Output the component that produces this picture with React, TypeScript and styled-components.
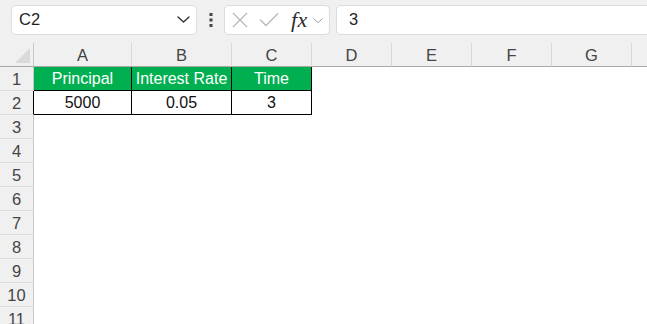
import React from 'react';
import styled, { createGlobalStyle } from 'styled-components';

const GlobalStyle = createGlobalStyle`
  html, body {
    margin: 0;
    padding: 0;
    background: #ffffff;
    overflow: hidden;
  }
  body {
    font-family: "Liberation Sans", Arial, sans-serif;
  }
`;

const Page = styled.div`
  width: 647px;
  height: 324px;
  overflow: hidden;
  background: #ffffff;
`;

const TopBar = styled.div`
  display: flex;
  align-items: center;
  height: 43px;
  padding: 0 0 4px 11px;
  box-sizing: border-box;
  background: #f0f0f0;
`;

const NameBox = styled.div`
  display: flex;
  align-items: center;
  justify-content: space-between;
  width: 186px;
  height: 30px;
  box-sizing: border-box;
  padding: 0 6px 0 7px;
  background: #ffffff;
  border: 1px solid #dcdcdc;
  border-radius: 5px;
  font-size: 16.5px;
  color: #1f1f1f;
`;

const Dots = styled.div`
  display: flex;
  justify-content: center;
  width: 27px;
`;

const FxBox = styled.div`
  display: flex;
  align-items: center;
  width: 106px;
  height: 30px;
  box-sizing: border-box;
  padding-left: 7px;
  background: #ffffff;
  border: 1px solid #dcdcdc;
  border-radius: 5px;
`;

const Fx = styled.span`
  font-family: "Liberation Serif", "Times New Roman", serif;
  font-style: italic;
  font-size: 22px;
  color: #2b2b2b;
  margin-left: 12px;
  letter-spacing: 0.5px;
  line-height: 22px;
`;

const FxMenu = styled.span`
  display: flex;
  margin-left: 5px;
  padding-top: 2px;
`;

const FormulaInput = styled.div`
  display: flex;
  align-items: center;
  flex: 1;
  height: 30px;
  margin-left: 6px;
  margin-right: -20px;
  box-sizing: border-box;
  padding-left: 12px;
  background: #ffffff;
  border: 1px solid #dcdcdc;
  border-radius: 5px;
  font-size: 16.5px;
  color: #1f1f1f;
`;

const Sheet = styled.div`
  display: grid;
  grid-template-columns: 34px 98px 100px 80px 80px 80px 80px 80px 80px;
  grid-template-rows: 24px;
  grid-auto-rows: 24px;
  font-size: 16.5px;
`;

const Corner = styled.div`
  position: relative;
  background: #f0f0f0;
  border-right: 1px solid #c9c9c9;
  border-bottom: 1px solid #a6a6a6;

  &::after {
    content: '';
    position: absolute;
    right: 3px;
    bottom: 3px;
    width: 0;
    height: 0;
    border-left: 15px solid transparent;
    border-bottom: 15px solid #dadada;
  }
`;

const ColHeader = styled.div`
  display: flex;
  align-items: flex-end;
  justify-content: center;
  padding-bottom: 2px;
  background: #f0f0f0;
  color: #444;
  border-right: 1px solid #d8d8d8;
  border-bottom: 1px solid #a6a6a6;
  line-height: 18px;
`;

const RowHeader = styled.div<{ $edge?: string }>`
  display: flex;
  align-items: flex-end;
  justify-content: center;
  padding-bottom: 2px;
  background: #f0f0f0;
  color: #444;
  border-right: 1px solid ${p => p.$edge || '#c9c9c9'};
  border-bottom: 1px solid #dcdcdc;
  line-height: 18px;
`;

const Cell = styled.div<{ $head?: boolean; $boxed?: boolean }>`
  display: flex;
  align-items: flex-end;
  justify-content: center;
  padding-bottom: 2px;
  line-height: 18px;
  font-size: 16px;
  white-space: nowrap;
  overflow: hidden;
  background: ${p => (p.$head ? '#00b050' : '#ffffff')};
  color: ${p => (p.$head ? '#ffffff' : '#111')};
  border-right: 1px solid ${p => (p.$boxed ? '#000' : 'transparent')};
  border-bottom: 1px solid ${p => (p.$boxed ? '#000' : 'transparent')};
`;

const Chevron = ({ size = 13, color = '#333', width = 1.4 }: { size?: number; color?: string; width?: number }) => (
  <svg width={size} height={size * 0.55} viewBox="0 0 13 7" fill="none">
    <path d="M1 1 L6.5 6 L12 1" stroke={color} strokeWidth={width} strokeLinecap="round" strokeLinejoin="round" />
  </svg>
);

// H is off-screen in the reference, so its header is left blank
const columns = ['A', 'B', 'C', 'D', 'E', 'F', 'G', ''];
const table = [
  ['Principal', 'Interest Rate', 'Time'],
  ['5000', '0.05', '3'],
];

export default function App() {
  const rows = Array.from({ length: 11 }, (_, i) => i + 1);

  return (
    <Page>
      <GlobalStyle />
      <TopBar>
        <NameBox>
          <span>C2</span>
          <Chevron />
        </NameBox>
        <Dots>
          <svg width="4" height="14" viewBox="0 0 4 14">
            <rect x="0.5" y="0" width="3" height="3" fill="#444" />
            <rect x="0.5" y="5.5" width="3" height="3" fill="#444" />
            <rect x="0.5" y="11" width="3" height="3" fill="#444" />
          </svg>
        </Dots>
        <FxBox>
          <svg width="16" height="16" viewBox="0 0 16 16">
            <path d="M1 1 L15 15 M15 1 L1 15" stroke="#b8b8b8" strokeWidth="1.3" />
          </svg>
          <svg width="20" height="15" viewBox="0 0 20 15" style={{ marginLeft: 11 }}>
            <path d="M1 7.5 L7 13.5 L19 1.5" stroke="#b8b8b8" strokeWidth="1.3" fill="none" />
          </svg>
          <Fx>fx</Fx>
          <FxMenu>
            <Chevron size={10} color="#8a8a8a" width={1.1} />
          </FxMenu>
        </FxBox>
        <FormulaInput>3</FormulaInput>
      </TopBar>

      <Sheet>
        <Corner />
        {columns.map((c, i) => (
          <ColHeader key={i}>{c}</ColHeader>
        ))}
        {rows.map(r => (
          <React.Fragment key={r}>
            <RowHeader $edge={r === 2 ? '#000' : undefined}>{r}</RowHeader>
            {columns.map((_, ci) => {
              const data = table[r - 1];
              const value = data && ci < 3 ? data[ci] : '';
              return (
                <Cell key={ci} $head={r === 1 && ci < 3} $boxed={!!data && ci < 3}>
                  {value}
                </Cell>
              );
            })}
          </React.Fragment>
        ))}
      </Sheet>
    </Page>
  );
}
